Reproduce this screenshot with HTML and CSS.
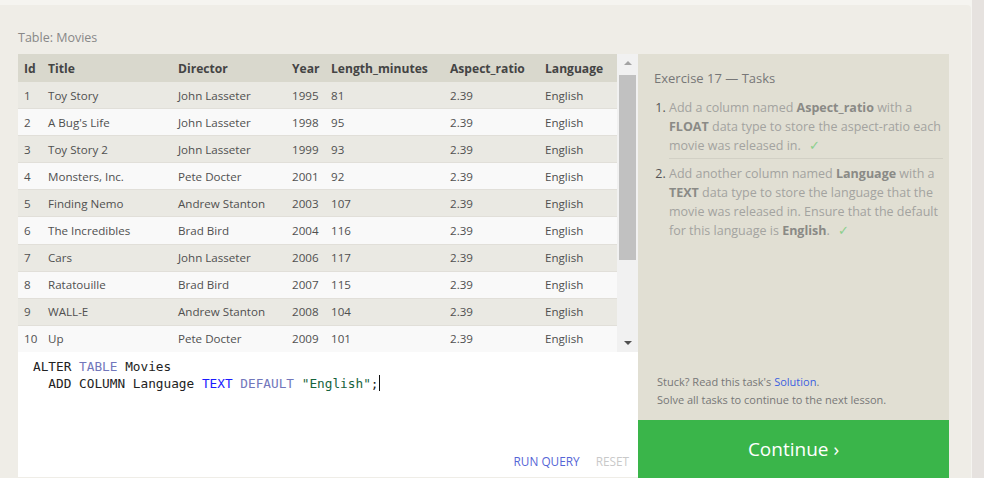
FILE: index.html
```html
<!DOCTYPE html>
<html>
<head>
<meta charset="utf-8">
<link rel="stylesheet" href="styles.css">
</head>
<body>
<div class="page">
  <div class="card">
    <div class="table-label">Table: Movies</div>
    <div class="workspace">
      <div class="left">
        <div class="table-box">
          <table class="data">
            <thead>
              <tr><th class="c-id">Id</th><th class="c-title">Title</th><th class="c-dir">Director</th><th class="c-year">Year</th><th class="c-len">Length_minutes</th><th class="c-asp">Aspect_ratio</th><th class="c-lang">Language</th></tr>
            </thead>
            <tbody>
              <tr><td>1</td><td>Toy Story</td><td>John Lasseter</td><td>1995</td><td>81</td><td>2.39</td><td>English</td></tr>
              <tr><td>2</td><td>A Bug's Life</td><td>John Lasseter</td><td>1998</td><td>95</td><td>2.39</td><td>English</td></tr>
              <tr><td>3</td><td>Toy Story 2</td><td>John Lasseter</td><td>1999</td><td>93</td><td>2.39</td><td>English</td></tr>
              <tr><td>4</td><td>Monsters, Inc.</td><td>Pete Docter</td><td>2001</td><td>92</td><td>2.39</td><td>English</td></tr>
              <tr><td>5</td><td>Finding Nemo</td><td>Andrew Stanton</td><td>2003</td><td>107</td><td>2.39</td><td>English</td></tr>
              <tr><td>6</td><td>The Incredibles</td><td>Brad Bird</td><td>2004</td><td>116</td><td>2.39</td><td>English</td></tr>
              <tr><td>7</td><td>Cars</td><td>John Lasseter</td><td>2006</td><td>117</td><td>2.39</td><td>English</td></tr>
              <tr><td>8</td><td>Ratatouille</td><td>Brad Bird</td><td>2007</td><td>115</td><td>2.39</td><td>English</td></tr>
              <tr><td>9</td><td>WALL-E</td><td>Andrew Stanton</td><td>2008</td><td>104</td><td>2.39</td><td>English</td></tr>
              <tr><td>10</td><td>Up</td><td>Pete Docter</td><td>2009</td><td>101</td><td>2.39</td><td>English</td></tr>
            </tbody>
          </table>
          <div class="scrollbar">
            <div class="arrow arrow-up"></div>
            <div class="track"><div class="thumb"></div></div>
            <div class="arrow arrow-down"></div>
          </div>
        </div>
        <div class="editor">
          <pre class="code"><span class="kw">ALTER</span> <span class="kw2">TABLE</span> Movies
  ADD COLUMN Language <span class="type">TEXT</span> <span class="kw2">DEFAULT</span> <span class="str">"English"</span>;<span class="cursor"></span></pre>
          <div class="actions">
            <span class="run">RUN QUERY</span>
            <span class="reset">RESET</span>
          </div>
        </div>
      </div>
      <div class="right">
        <div class="tasks">
          <div class="tasks-title">Exercise 17 — Tasks</div>
          <ol class="task-list">
            <li><span class="task-text">Add a column named <b>Aspect_ratio</b> with a <b>FLOAT</b> data type to store the aspect-ratio each movie was released in. <span class="check">✓</span></span></li>
            <li><span class="task-text">Add another column named <b>Language</b> with a <b>TEXT</b> data type to store the language that the movie was released in. Ensure that the default for this language is <b>English</b>. <span class="check">✓</span></span></li>
          </ol>
          <div class="stuck">
            <div>Stuck? Read this task's <span class="link">Solution</span>.</div>
            <div>Solve all tasks to continue to the next lesson.</div>
          </div>
        </div>
        <div class="continue">Continue ›</div>
      </div>
    </div>
  </div>
</div>
</body>
</html>
```
FILE: styles.css
```css
html, body {
  margin: 0;
  padding: 0;
  height: 478px;
  overflow: hidden;
  background: #e6e2df;
  font-family: "Open Sans", "Liberation Sans", sans-serif;
}

.page {
  width: 972px;
  background: #f5f4f0;
  padding-top: 5px;
  height: 473px;
}

.card {
  width: 971px;
  height: 480px;
  background: #efede7;
  border-top-right-radius: 4px;
  box-sizing: border-box;
  padding-left: 18px;
}

.table-label {
  font-size: 12.5px;
  color: #888;
  line-height: 18px;
  padding-top: 24px;
  margin-bottom: 7px;
}

.workspace {
  display: flex;
}

.left {
  width: 620px;
  display: flex;
  flex-direction: column;
}

.table-box {
  display: flex;
  height: 298px;
  background: #f9f9f9;
}

.data {
  border-collapse: collapse;
  table-layout: fixed;
  width: 599px;
  font-size: 11.6px;
  color: #505050;
}

.data th {
  background: #d9d8cd;
  color: #444;
  font-weight: 700;
  font-size: 12.1px;
  text-align: left;
  height: 28px;
  padding: 0 0 0 6px;
  white-space: nowrap;
}

.data td {
  height: 26px;
  padding: 0 0 0 6px;
  border-bottom: 1px solid #e1dfd9;
  white-space: nowrap;
}

.data tbody tr:nth-child(odd) td { background: #eae9e3; }
.data tbody tr:nth-child(even) td { background: #f9f9f9; }
.data tbody tr:last-child td { border-bottom: none; }

.c-id { width: 18px; }
.c-title { width: 124px; }
.c-dir { width: 108px; }
.c-year { width: 33px; }
.c-len { width: 113px; }
.c-asp { width: 89px; }
.c-lang { width: 72px; }

.scrollbar {
  width: 21px;
  background: #f1f1f1;
  display: flex;
  flex-direction: column;
  align-items: center;
}

.arrow {
  height: 18px;
  width: 17px;
  display: flex;
  align-items: center;
  justify-content: center;
}

.arrow-up::before {
  content: "";
  border-left: 4px solid transparent;
  border-right: 4px solid transparent;
  border-bottom: 4px solid #a3a3a3;
}

.arrow-down::before {
  content: "";
  border-left: 4px solid transparent;
  border-right: 4px solid transparent;
  border-top: 4px solid #505050;
}

.track {
  flex: 1;
  width: 17px;
}

.thumb {
  margin-top: 3px;
  height: 185px;
  background: #c1c1c1;
}

.editor {
  background: #fff;
  height: 125px;
  display: flex;
  flex-direction: column;
}

.code {
  margin: 0;
  padding: 6px 0 0 15px;
  font-family: "DejaVu Sans Mono", "Liberation Mono", monospace;
  font-size: 12.75px;
  line-height: 17px;
  color: #222;
  flex: 1;
}

.kw { color: #222; }
.kw2 { color: #7277bb; }
.type { color: #1a1aff; }
.str { color: #16633c; }

.cursor {
  display: inline-block;
  width: 1px;
  height: 16px;
  background: #111;
  vertical-align: -3px;
}

.actions {
  display: flex;
  justify-content: flex-end;
  gap: 16px;
  padding: 0 9px 8px 0;
  font-size: 11.8px;
  line-height: 16px;
}

.run { color: #5565d6; }
.reset { color: #c9c9c9; }

.right {
  width: 311px;
  display: flex;
  flex-direction: column;
}

.tasks {
  background: #e1dfd3;
  height: 366px;
  box-sizing: border-box;
  padding: 15px 6px 11px 16px;
  display: flex;
  flex-direction: column;
}

.tasks-title {
  font-size: 13px;
  line-height: 18px;
  color: #777;
}

.task-list {
  margin: 11px 0 0 0;
  padding: 0 0 0 15px;
  font-size: 12.5px;
  line-height: 19px;
  color: #555;
}

.task-list li {
  padding-bottom: 3px;
  padding-left: 0;
}

.task-list li + li {
  border-top: 1px solid #d2d0c5;
  padding-top: 5px;
}

.task-text { color: #a3a3a0; }
.task-text b { color: #8a8a86; font-weight: 700; }

.check {
  color: #8ccf8c;
  margin-left: 5px;
}

.stuck {
  margin-top: auto;
  font-size: 11px;
  line-height: 18px;
  color: #777;
  padding-left: 3px;
}

.link { color: #3b5fe0; }

.continue {
  background: #3ab54a;
  color: #fff;
  height: 58px;
  display: flex;
  align-items: center;
  justify-content: center;
  font-size: 19px;
}
```
